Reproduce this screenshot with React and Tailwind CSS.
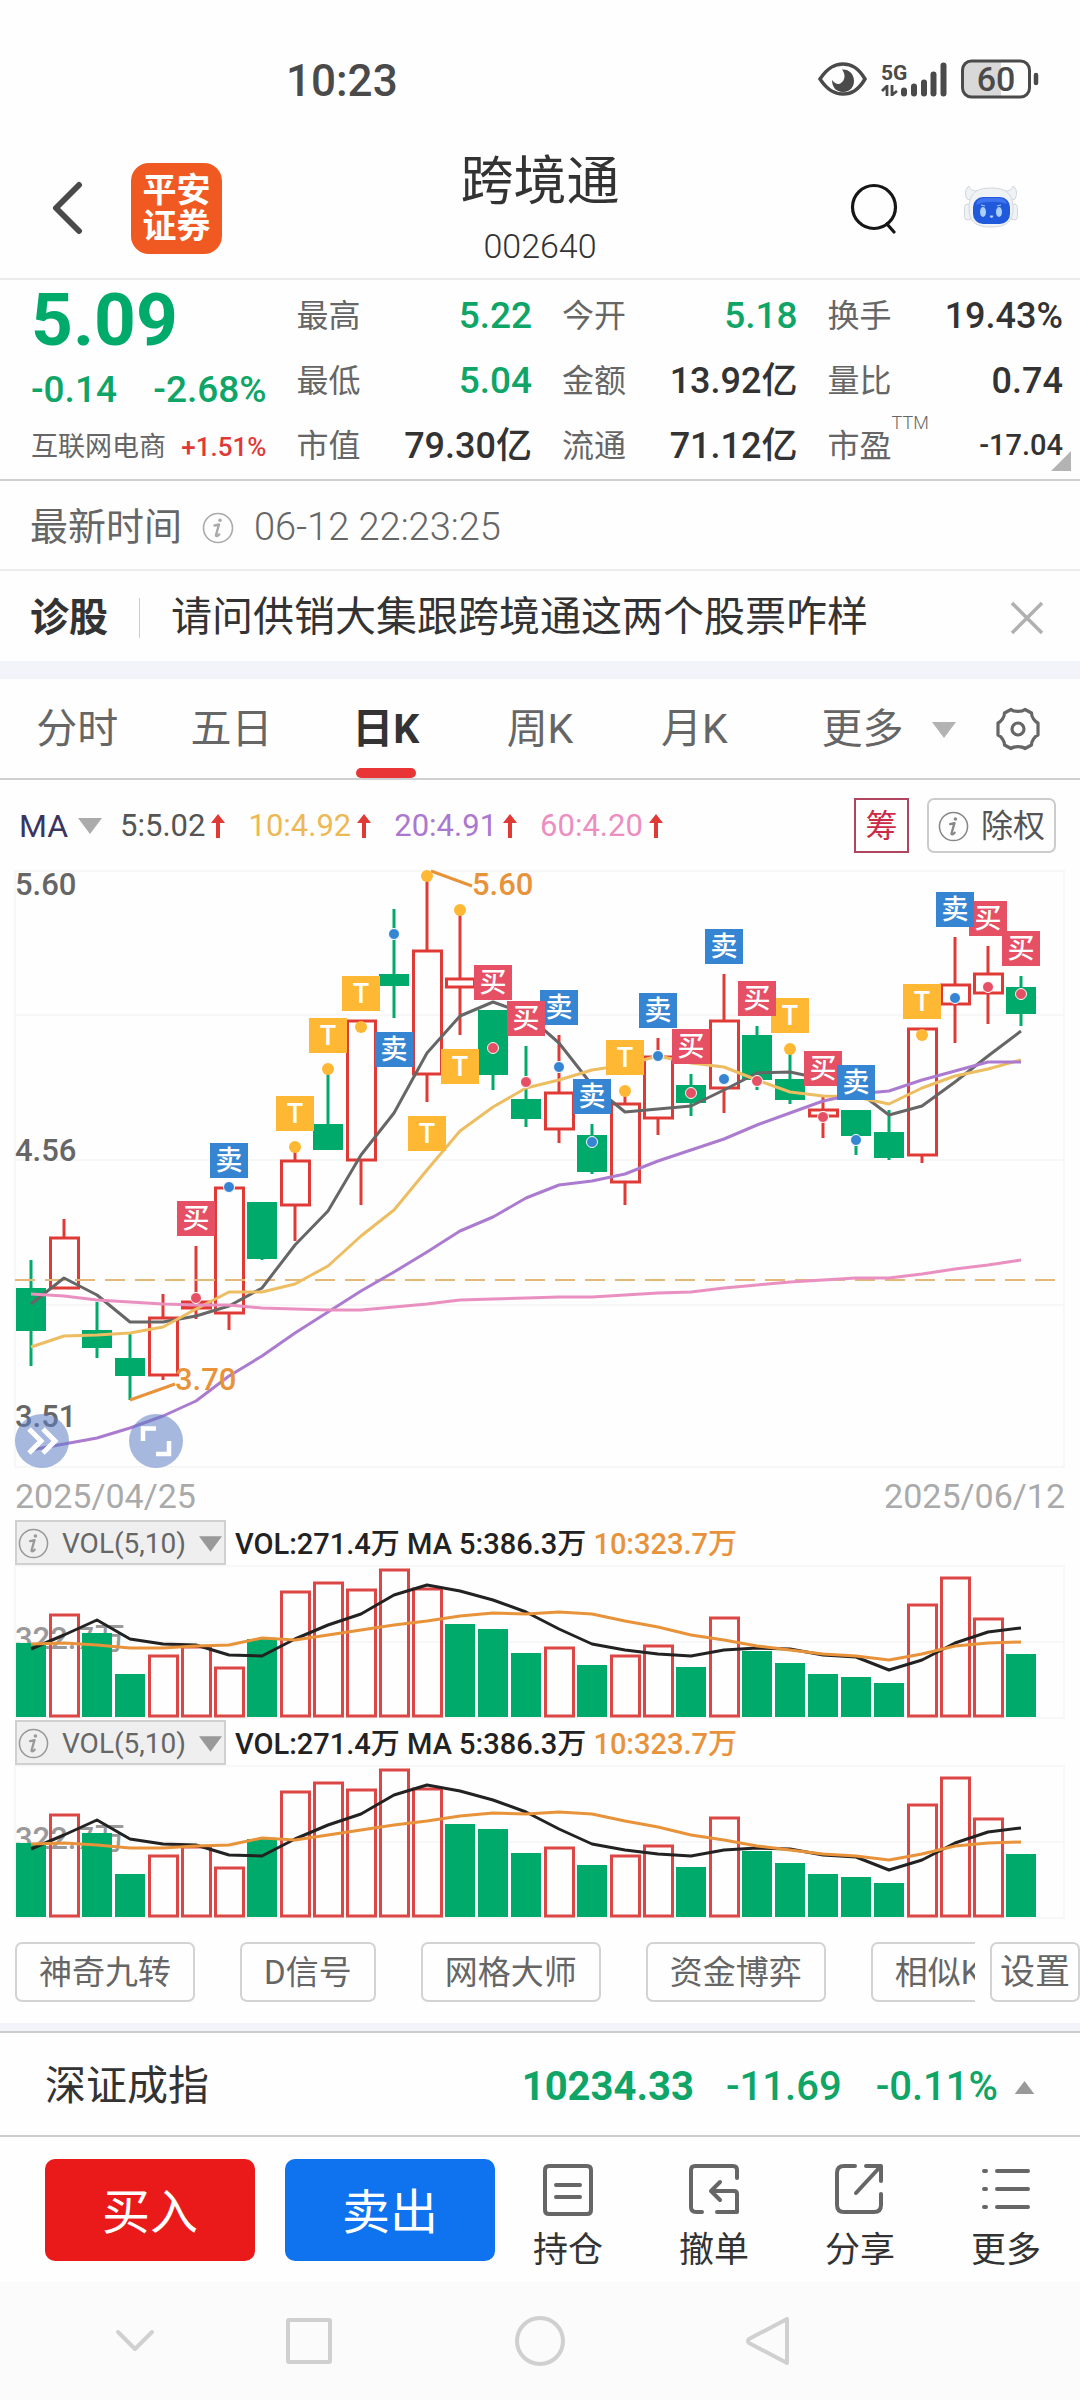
import React from "react";

const FONT = "font-['Roboto','Noto_Sans_CJK_SC',sans-serif]";

const UP = "#e03a36";
const DOWN = "#00aa6a";

const x = (i) => 31 + 33 * i;
const line = (ys) => ys.map((y, i) => `${x(i)},${y}`).join(" ");

/* [direction, body top, body bottom, wick top, wick bottom] */
const CANDLES = [
  ["d", 1288, 1331, 1260, 1366],
  ["u", 1237, 1289, 1219, 1289],
  ["d", 1330, 1348, 1302, 1358],
  ["d", 1358, 1376, 1334, 1400],
  ["u", 1317, 1376, 1294, 1380],
  ["u", 1301, 1309, 1246, 1319],
  ["u", 1187, 1314, 1187, 1330],
  ["d", 1202, 1259, 1202, 1260],
  ["u", 1160, 1206, 1147, 1241],
  ["d", 1124, 1150, 1069, 1150],
  ["u", 1020, 1161, 1020, 1205],
  ["d", 974, 986, 909, 1018],
  ["u", 950, 1075, 876, 1102],
  ["u", 978, 988, 910, 1035],
  ["d", 1010, 1075, 1010, 1090],
  ["d", 1099, 1119, 1046, 1127],
  ["u", 1092, 1130, 1035, 1143],
  ["d", 1135, 1172, 1124, 1174],
  ["u", 1103, 1183, 1095, 1205],
  ["u", 1056, 1119, 1038, 1135],
  ["d", 1085, 1103, 1074, 1116],
  ["u", 1020, 1089, 974, 1113],
  ["d", 1035, 1080, 1026, 1090],
  ["d", 1079, 1100, 1050, 1104],
  ["u", 1109, 1117, 1097, 1138],
  ["d", 1110, 1136, 1110, 1155],
  ["d", 1132, 1158, 1110, 1160],
  ["u", 1028, 1156, 1028, 1163],
  ["u", 984, 1005, 937, 1043],
  ["u", 973, 994, 946, 1024],
  ["d", 987, 1014, 976, 1026],
];

const MA5 = [1304, 1278, 1295, 1322, 1322, 1316, 1306, 1288, 1245, 1211, 1155, 1113, 1053, 1016, 1002, 1014, 1043, 1085, 1112, 1109, 1106, 1090, 1073, 1072, 1079, 1090, 1115, 1106, 1082, 1056, 1031];
const MA10 = [1347, 1336, 1335, 1333, 1327, 1309, 1292, 1292, 1284, 1266, 1236, 1210, 1170, 1131, 1107, 1088, 1080, 1070, 1065, 1056, 1063, 1067, 1080, 1092, 1096, 1097, 1104, 1088, 1076, 1069, 1060];
const MA20 = [1450, 1444, 1438, 1428, 1416, 1401, 1376, 1356, 1333, 1312, 1291, 1272, 1252, 1231, 1217, 1198, 1185, 1181, 1174, 1161, 1150, 1139, 1125, 1113, 1101, 1094, 1091, 1080, 1071, 1062, 1062];
const MA60 = [1294, 1296, 1300, 1302, 1304, 1305, 1305, 1308, 1309, 1310, 1310, 1307, 1304, 1300, 1299, 1298, 1297, 1297, 1295, 1293, 1292, 1288, 1285, 1282, 1280, 1278, 1278, 1274, 1269, 1265, 1260];

const BUY = "#e55065";
const SELL = "#3585d3";
const TRADE = "#ffb833";

const DOTS = [
  [5, 1298, BUY], [6, 1187, SELL], [8, 1147, TRADE], [9, 1069, TRADE], [10, 1027, TRADE], [11, 934, SELL],
  [12, 876, TRADE], [13, 910, TRADE], [14, 1048, BUY], [15, 1082, BUY], [16, 1067, SELL], [17, 1142, SELL],
  [18, 1091, TRADE], [19, 1056, SELL], [20, 1093, BUY], [21, 1079, SELL], [22, 1081, BUY], [23, 1049, TRADE],
  [24, 1117, BUY], [25, 1140, SELL], [27, 1035, TRADE], [28, 998, SELL], [29, 987, BUY], [30, 994, BUY],
];

/* [index, top, label], listed back to front */
const BADGES = [
  [8, 1096, "T"], [9, 1018, "T"], [10, 976, "T"], [12, 1116, "T"], [13, 1049, "T"], [18, 1040, "T"], [23, 998, "T"], [27, 984, "T"],
  [5, 1201, "买"], [6, 1143, "卖"], [11, 1032, "卖"], [16, 990, "卖"], [14, 965, "买"], [15, 1001, "买"],
  [17, 1079, "卖"], [19, 993, "卖"], [20, 1029, "买"], [21, 929, "卖"], [22, 981, "买"], [24, 1051, "买"],
  [25, 1065, "卖"], [30, 931, "买"], [29, 901, "买"], [28, 892, "卖"],
];
const BADGE_FILL = { T: TRADE, 买: BUY, 卖: SELL };

/* volume bars: direction and top edge, baseline 152 */
const VOLUME = [
  ["d", 78], ["u", 49], ["d", 68], ["d", 109], ["u", 90], ["u", 81], ["u", 102], ["d", 74], ["u", 26], ["u", 17],
  ["u", 24], ["u", 4], ["u", 23], ["d", 59], ["d", 64], ["d", 88], ["u", 82], ["d", 100], ["u", 90], ["u", 80],
  ["d", 102], ["u", 52], ["d", 86], ["d", 98], ["d", 109], ["d", 112], ["d", 118], ["u", 39], ["u", 12], ["u", 53], ["d", 89],
];
const VOL5 = [84, 70, 55, 74, 79, 80, 90, 91, 74, 60, 49, 30, 20, 26, 35, 47, 64, 79, 85, 89, 91, 85, 83, 84, 90, 92, 105, 95, 78, 67, 63];
const VOL10 = [79, 78, 80, 83, 83, 81, 80, 73, 75, 70, 65, 60, 56, 51, 48, 49, 47, 49, 56, 62, 70, 75, 81, 85, 89, 91, 95, 89, 81, 78, 77];

function Triangle({ up = false, className }) {
  return (
    <svg viewBox="0 0 24 16" className={className} aria-hidden="true">
      <path d={up ? "M12 0L24 16H0z" : "M0 0H24L12 16z"} fill="currentColor" />
    </svg>
  );
}

function Info({ className }) {
  return (
    <svg viewBox="0 0 32 32" className={className} fill="none" stroke="currentColor" aria-hidden="true">
      <circle cx="16" cy="16" r="14.5" strokeWidth="1.6" />
      <path d="M12.500 13.500l4.500-1-3 10.500c-.3 1.600 1.200 1.600 3.200-.6" strokeWidth="2.400" strokeLinecap="round" strokeLinejoin="round" />
      <circle cx="18" cy="8.200" r="1.800" fill="currentColor" stroke="none" />
    </svg>
  );
}

function StatusBar() {
  return (
    <div className="flex h-[154px] items-center justify-between pt-[4px] pr-[41px] pl-[286px] text-[#4a4a4a]">
      <span className="pt-[3px] text-[44px] leading-[52px] font-medium">10:23</span>
      <svg viewBox="0 0 222 42" className="h-[42px] w-[222px]" role="img" aria-label="5G 60%">
        <path d="M3 21C11 9 18 6 26 6s15 3 22 15C41 33 34 36 26 36S11 33 3 21z" fill="none" stroke="#4a4a4a" strokeWidth="3.500" />
        <path d="M25 11.500C32 11 37 16 37 23c0 6-4 11-11 11s-11-5-11-12c3 4 7 5 9 3 4-3 5-8 1-13.500z" fill="#4a4a4a" />
        <text x="64" y="22" fontSize="21" fontWeight="700" fill="#4a4a4a">5G</text>
        <path d="M70 27v11M70 28l-5 5M75 27v11M75 37l5-4" stroke="#4a4a4a" strokeWidth="2.800" fill="none" />
        <path d="M87 32.500v3M97 28.500v7M107 24.500v11M116.500 16.500v19M126.500 7.500v28" stroke="#4a4a4a" strokeWidth="6" strokeLinecap="round" />
        <path d="M156 4h28v35h-28a10 10 0 0 1-10-10V14a10 10 0 0 1 10-10z" fill="#d8d8d8" />
        <rect x="145.500" y="3" width="67" height="36" rx="9" fill="none" stroke="#4a4a4a" strokeWidth="3" />
        <text x="179" y="33" fontSize="34" fontWeight="500" textAnchor="middle" fill="#4a4a4a">60</text>
        <path d="M219 17v8" stroke="#4a4a4a" strokeWidth="4.500" strokeLinecap="round" />
      </svg>
    </div>
  );
}

function Robot() {
  return (
    <svg viewBox="0 0 54 46" className="h-[46px] w-[54px]" aria-hidden="true">
      <g fill="#f0f3f6" stroke="#d2d6dd" strokeWidth="1">
        <path d="M3 14C0 8 2 3 5 1c1 4 4 5 9 5l-5 10zM51 14c3-6 1-11-2-13-1 4-4 5-9 5l5 10z" />
        <rect x="0.500" y="19" width="7" height="16" rx="3.500" />
        <rect x="46.500" y="19" width="7" height="16" rx="3.500" />
        <path d="M27 3c14 0 22 5 22 20 0 13-6 19-22 19S5 36 5 23C5 8 13 3 27 3z" />
      </g>
      <rect x="9" y="12" width="37" height="27" rx="10" fill="#2159dd" />
      <path d="M12 20c1-5 4-7 9-7h13c5 0 8 2 9 6-9-3-22-3-31 1z" fill="#3f74ee" />
      <ellipse cx="19" cy="27" rx="3" ry="5" fill="#a9d0ff" />
      <ellipse cx="35" cy="27" rx="3" ry="5" fill="#a9d0ff" />
      <path d="M17 20l4 1M37 20l-4 1M26 31h3l-1.500 2z" stroke="#a9d0ff" strokeWidth="1" fill="#a9d0ff" />
    </svg>
  );
}

function Header() {
  return (
    <header className="grid h-[126px] grid-cols-[1fr_auto_1fr] items-start border-b-2 border-[#ececec]">
      <div className="flex h-[108px] items-center gap-[48px] pl-[51px]">
        <button type="button" aria-label="返回">
          <svg viewBox="0 0 32 54" className="h-[54px] w-[32px]" fill="none" stroke="#4a4a4a" strokeWidth="6" strokeLinecap="round" strokeLinejoin="round">
            <path d="M28 4L5 27l23 23" />
          </svg>
        </button>
        <div className="flex size-[91px] flex-col items-center justify-center rounded-[18px] bg-[#f05a22] text-[34px] leading-[36px] font-bold text-white">
          <span>平安</span>
          <span>证券</span>
        </div>
      </div>
      <div className="flex flex-col items-center gap-[18px] text-[#333]">
        <h1 className="text-[53px] leading-[56px]">跨境通</h1>
        <p className="text-[34px] leading-[36px] font-light">002640</p>
      </div>
      <div className="flex h-[108px] items-center justify-end gap-[65px] pr-[62px]">
        <button type="button" aria-label="搜索">
          <svg viewBox="0 0 50 52" className="h-[52px] w-[50px]" fill="none" stroke="#161616" strokeWidth="3.200" strokeLinecap="round">
            <circle cx="25" cy="25" r="21.500" />
            <path d="M38 42l7 8" />
          </svg>
        </button>
        <button type="button" aria-label="智能助手"><Robot /></button>
      </div>
    </header>
  );
}

const STATS = [
  [["最高", "5.22", "g"], ["最低", "5.04", "g"], ["市值", "79.30亿", ""]],
  [["今开", "5.18", "g"], ["金额", "13.92亿", ""], ["流通", "71.12亿", ""]],
  [["换手", "19.43%", ""], ["量比", "0.74", ""], ["市盈", "-17.04", "s"]],
];
const STAT_CLASS = {
  g: "text-[37px] text-[#0ea567]",
  "": "text-[36px] text-[#333]",
  s: "text-[29px] text-[#333]",
};

function Quote() {
  return (
    <section className="relative grid grid-cols-4 gap-x-[30px] border-b-2 border-[#cfcfcf] pt-[3px] pr-[17px] pb-px pl-[31px]">
      <div className="flex flex-col whitespace-nowrap">
        <div className="h-[75px] text-[73px] leading-[75px] font-bold text-[#00aa6a]">5.09</div>
        <div className="flex h-[63px] items-center justify-between text-[37px] font-medium text-[#0ea567]">
          <span>-0.14</span>
          <span>-2.68%</span>
        </div>
        <div className="flex h-[53px] items-center justify-between text-[27px] text-[#666]">
          <span>互联网电商</span>
          <span className="text-[26px] font-medium text-[#e03a36]">+1.51%</span>
        </div>
      </div>
      {STATS.map((column, c) => (
        <dl key={c} className="whitespace-nowrap">
          {column.map(([label, value, kind]) => (
            <div key={label} className="flex h-[65px] items-center justify-between">
              <dt className="text-[32px] text-[#666]">
                {label}
                {kind === "s" && <sup className="-top-[28px] text-[18px] font-light">TTM</sup>}
              </dt>
              <dd className={"font-medium " + STAT_CLASS[kind]}>{value}</dd>
            </div>
          ))}
        </dl>
      ))}
      <svg viewBox="0 0 20 20" className="absolute right-[9px] bottom-[8px] size-[20px]" aria-hidden="true">
        <path d="M20 0V20H0z" fill="#b3b3b3" />
      </svg>
    </section>
  );
}

function Tabs() {
  const tab = "relative flex h-full items-center justify-center pt-[2px]";
  return (
    <nav className="grid h-[101px] grid-cols-7 border-b-2 border-[#cfcfcf] text-[41px] text-[#666]">
      <button type="button" className={tab}>分时</button>
      <button type="button" className={tab}>五日</button>
      <button type="button" className={tab + " font-bold text-[#333]"}>
        日K
        <span className="absolute bottom-0 left-1/2 h-[10px] w-[60px] -translate-x-1/2 rounded-[5px] bg-[#e93535]" />
      </button>
      <button type="button" className={tab}>周K</button>
      <button type="button" className={tab}>月K</button>
      <div className="col-span-2 flex items-center justify-between pr-[40px] pl-[50px]">
        <button type="button" className="flex items-center gap-[29px] pt-[2px]">
          更多
          <Triangle className="h-[16px] w-[24px] text-[#b3b3b3]" />
        </button>
        <button type="button" aria-label="图表设置">
          <svg viewBox="0 0 44 44" className="size-[44px]" fill="none" stroke="#666" strokeWidth="3.200" strokeLinejoin="round">
            <path d="M15 2.500C18 5 26 5 29 2.500L35.500 6c0 4 3 8.500 6.500 10v12c-3.500 1.500-6.500 6-6.500 10L29 41.500c-3-2.500-11-2.500-14 0L8.500 38c0-4-3-8.500-6.500-10V16C5.500 14.500 8.500 10 8.500 6z" />
            <circle cx="22" cy="22" r="6" />
          </svg>
        </button>
      </div>
    </nav>
  );
}

function Average({ children, color }) {
  return (
    <span className={"flex items-center gap-[6px] " + color}>
      {children}
      <svg viewBox="0 0 14 24" className="h-[24px] w-[14px]" aria-hidden="true">
        <path d="M7 0l7 9H9v15H5V9H0z" fill="#e03a36" />
      </svg>
    </span>
  );
}

function Averages() {
  return (
    <div className="flex h-[90px] items-center justify-between pr-[24px] pl-[19px] text-[32px] whitespace-nowrap">
      <div className="flex items-center pt-[2px]">
        <button type="button" className="mr-[18px] flex items-center gap-[10px] text-[#3a3560]">
          MA
          <Triangle className="h-[16px] w-[24px] text-[#ababab]" />
        </button>
        <div className="flex items-center gap-[23px] text-[31px]">
          <Average color="text-[#555]">5:5.02</Average>
          <Average color="text-[#ecb955]">10:4.92</Average>
          <Average color="text-[#ab78d0]">20:4.91</Average>
          <Average color="text-[#ec8fc0]">60:4.20</Average>
        </div>
      </div>
      <div className="flex gap-[18px]">
        <button type="button" className="flex h-[55px] w-[55px] items-center justify-center border-2 border-[#b04560] pt-[2px] text-[#cc2b48]">筹</button>
        <button type="button" className="flex h-[55px] items-center gap-[12px] rounded-[7px] border-2 border-[#ccc] px-[9px] pt-[2px] text-[#555]">
          <Info className="size-[31px] text-[#888]" />
          除权
        </button>
      </div>
    </div>
  );
}

function PriceChart() {
  return (
    <div className="relative">
      <svg viewBox="0 870 1080 598" className="block h-auto w-full overflow-visible" role="img" aria-label="日K线图">
        <g stroke="#f7f7f7" strokeWidth="2" fill="none">
          <path d="M15 871H1064V1467H15zM15 1015H1064M15 1160H1064M15 1305H1064" />
        </g>
        <g fontSize="31" fontWeight="500" fill="#666">
          <text x="15" y="895">5.60</text>
          <text x="15" y="1161">4.56</text>
          <text x="15" y="1427">3.51</text>
        </g>
        {CANDLES.map(([dir, top, bottom, high, low], i) =>
          dir === "u" ? (
            <g key={i} stroke={UP} strokeWidth="3" fill="none">
              <path d={`M${x(i)} ${high}V${top}M${x(i)} ${bottom}V${low}`} />
              <rect x={x(i) - 13.5} y={top + 1} width="28" height={bottom - top - 2} fill={i === 5 ? UP : "none"} />
            </g>
          ) : (
            <g key={i} fill={DOWN}>
              <rect x={x(i) - 1.5} y={high} width="3" height={low - high} />
              <rect x={x(i) - 15} y={top} width="30" height={bottom - top} />
            </g>
          )
        )}
        <path d="M15 1280H1056" stroke="#e3b878" strokeWidth="2" strokeDasharray="20 10" />
        <g fill="none" strokeWidth="3" strokeLinejoin="round">
          <polyline points={line(MA5)} stroke="#666" />
          <polyline points={line(MA10)} stroke="#edbd62" />
          <polyline points={line(MA20)} stroke="#ab7bd0" />
          <polyline points={line(MA60)} stroke="#ea90c1" />
          <path d="M431 871L472 886M130 1400L175 1384" stroke="#e8933a" />
        </g>
        <g fontSize="31" fontWeight="500" fill="#e8933a">
          <text x="472" y="895">5.60</text>
          <text x="175" y="1390">3.70</text>
        </g>
        {DOTS.map(([i, y, fill]) => (
          <circle key={i} cx={x(i)} cy={y} r={fill === TRADE ? 6 : 5.5} fill={fill} stroke={fill === TRADE ? "none" : "#fff"} strokeWidth="1" />
        ))}
        {BADGES.map(([i, y, label]) => (
          <g key={i}>
            <rect x={x(i) - 19} y={y} width="38" height="35" fill={BADGE_FILL[label]} />
            <text x={x(i)} y={y + 27} fontSize="27" fontWeight="500" textAnchor="middle" fill="#fff">{label}</text>
          </g>
        ))}
      </svg>
      <div className="absolute bottom-0 left-[15px] flex gap-[60px]">
        <button type="button" aria-label="展开" className="size-[54px] rounded-full bg-[#5f7dc5]/55">
          <svg viewBox="0 0 54 54" fill="none" stroke="#fff" strokeWidth="5">
            <path d="M14 15l12 12-12 12M28 15l12 12-12 12" />
          </svg>
        </button>
        <button type="button" aria-label="全屏" className="size-[54px] rounded-full bg-[#5f7dc5]/55">
          <svg viewBox="0 0 54 54" fill="none" stroke="#fff" strokeWidth="4.500">
            <path d="M14 27V14.500h13M27 40h13V27" />
          </svg>
        </button>
      </div>
    </div>
  );
}

function VolumePanel() {
  return (
    <section>
      <div className="flex h-[45px] items-center gap-[9px] pl-[15px] text-[29px] font-medium whitespace-nowrap text-[#222]">
        <button type="button" className="flex h-[45px] w-[211px] items-center justify-between border-2 border-[#d0d0d0] bg-[#efefef] pt-[2px] pr-[2px] pl-px text-[28px] font-normal text-[#666]">
          <Info className="size-[31px] text-[#999]" />
          VOL(5,10)
          <Triangle className="h-[20px] w-[23px] text-[#999]" />
        </button>
        <span className="pt-[4px]">
          VOL:271.4万 MA 5:386.3万 <span className="text-[#e8933a]">10:323.7万</span>
        </span>
      </div>
      <svg viewBox="0 0 1080 155" className="block h-auto w-full" role="img" aria-label="成交量">
        <path d="M15 1H1064V153H15zM15 77H1064" stroke="#f7f7f7" strokeWidth="2" fill="none" />
        <text x="15" y="84" fontSize="31" fontWeight="500" fill="#999">322.7万</text>
        {VOLUME.map(([dir, top], i) =>
          dir === "u" ? (
            <rect key={i} x={x(i) - 13.5} y={top + 1} width="28" height={150 - top} fill="none" stroke="#dc4644" strokeWidth="3" />
          ) : (
            <rect key={i} x={x(i) - 15} y={top} width="30" height={152 - top} fill={DOWN} />
          )
        )}
        <g fill="none" strokeWidth="3" strokeLinejoin="round">
          <polyline points={line(VOL5)} stroke="#222" />
          <polyline points={line(VOL10)} stroke="#e8933a" />
        </g>
      </svg>
    </section>
  );
}

function Indicators() {
  const chip = "h-[60px] shrink-0 rounded-[7px] border-2 border-[#d3d3d3] px-[22px] pt-[2px]";
  return (
    <div className="flex h-[103px] items-center gap-[15px] pt-px text-[33px] whitespace-nowrap text-[#666]">
      <div className="flex min-w-0 flex-1 gap-[45px] overflow-hidden pl-[15px]">
        {["神奇九转", "D信号", "网格大师", "资金博弈", "相似K"].map((name) => (
          <button key={name} type="button" className={chip}>{name}</button>
        ))}
      </div>
      <button type="button" className="h-[60px] w-[90px] rounded-[7px] border-2 border-[#d3d3d3] pt-[2px] text-[35px]">设置</button>
    </div>
  );
}

const ACTIONS = [
  ["持仓", "M6 2H44Q48 2 48 6V46Q48 50 44 50H6Q2 50 2 46V6Q2 2 6 2zM13 21H37M13 33H37"],
  ["撤单", "M48 14V6Q48 2 44 2H6Q2 2 2 6V43Q2 48 7 48H13M28 48H48V30Q48 27 45 27H23M31 18L22 27L31 36"],
  ["分享", "M20 2H9Q2 2 2 9V41Q2 48 9 48H39Q46 48 46 41V30M31 2H46V17M45 3L21 29"],
  ["更多", "M3 7H5M16 7H47M3 25H5M16 25H47M3 43H5M16 43H47"],
];

function TradeBar() {
  const trade = "h-[102px] w-[210px] rounded-[10px] pt-[6px] text-[48px] text-white";
  return (
    <div className="flex h-[145px] items-center pr-px pl-[45px]">
      <div className="flex gap-[30px]">
        <button type="button" className={trade + " bg-[#ea1a1a]"}>买入</button>
        <button type="button" className={trade + " bg-[#0f72ee]"}>卖出</button>
      </div>
      <div className="grid flex-1 grid-cols-4 pt-[18px]">
        {ACTIONS.map(([label, d]) => (
          <button key={label} type="button" className="flex flex-col items-center gap-[13px] text-[35px] leading-[44px] text-[#333]">
            <svg viewBox="0 0 50 52" className="h-[52px] w-[50px]" fill="none" stroke="#666" strokeWidth="4" strokeLinecap="round" strokeLinejoin="round" aria-hidden="true">
              <path d={d} />
            </svg>
            {label}
          </button>
        ))}
      </div>
    </div>
  );
}

function SystemNav() {
  const icon = { fill: "none", stroke: "#d0d0d0", strokeWidth: 4, strokeLinejoin: "round", strokeLinecap: "round" };
  return (
    <nav className="flex h-[118px] items-center bg-[#fbfbfb] pl-[115px]">
      <button type="button" aria-label="收起">
        <svg viewBox="0 0 40 24" className="h-[24px] w-[40px]" {...icon}><path d="M3 3l17 17L37 3" /></svg>
      </button>
      <button type="button" aria-label="最近任务" className="ml-[130px]">
        <svg viewBox="0 0 48 48" className="size-[48px]" {...icon}><rect x="3" y="3" width="42" height="42" rx="1" /></svg>
      </button>
      <button type="button" aria-label="主页" className="ml-[182px]">
        <svg viewBox="0 0 50 50" className="size-[50px]" {...icon}><circle cx="25" cy="25" r="23" /></svg>
      </button>
      <button type="button" aria-label="返回" className="ml-[180px]">
        <svg viewBox="0 0 46 50" className="h-[50px] w-[46px]" {...icon}><path d="M42 3V47L4 27Q2 25 4 23z" /></svg>
      </button>
    </nav>
  );
}

export default function App() {
  return (
    <main className={"bg-[#fefefe] text-[#333] " + FONT}>
      <StatusBar />
      <Header />
      <Quote />
      <div className="flex h-[90px] items-center border-b-2 border-[#ececec] pt-[5px] pl-[30px] text-[38px] text-[#666]">
        <span>最新时间</span>
        <Info className="mx-[20px] size-[32px] text-[#aaa]" />
        <time className="font-light">06-12 22:23:25</time>
      </div>
      <div className="flex h-[90px] items-center px-[30px] pt-[4px] whitespace-nowrap">
        <strong className="text-[39px]">诊股</strong>
        <span className="mx-[31px] h-[40px] w-px bg-[#ccc]" />
        <a href="#diagnosis" className="flex-1 text-[41px]">请问供销大集跟跨境通这两个股票咋样</a>
        <button type="button" aria-label="关闭" className="mr-[6px]">
          <svg viewBox="0 0 34 34" className="size-[34px]" stroke="#b0b0b0" strokeWidth="3.500"><path d="M2 2l30 30M32 2L2 32" /></svg>
        </button>
      </div>
      <div className="h-[18px] bg-[#f2f4f9]" />
      <Tabs />
      <Averages />
      <PriceChart />
      <div className="flex h-[52px] items-center justify-between px-[15px] pt-[4px] text-[34px] text-[#aaa]">
        <span>2025/04/25</span>
        <span>2025/06/12</span>
      </div>
      <VolumePanel />
      <VolumePanel />
      <Indicators />
      <div className="h-[8px] bg-[#f2f4f9]" />
      <div className="flex h-[106px] items-center justify-between border-y-2 border-[#ccc] pt-[6px] pr-[45px] pl-[45px]">
        <span className="text-[41px]">深证成指</span>
        <span className="flex items-center text-[40px] font-medium text-[#0ea567]">
          <b>10234.33</b>
          <span className="ml-[32px]">-11.69</span>
          <span className="mr-[16px] ml-[34px]">-0.11%</span>
          <Triangle up className="h-[13px] w-[21px] text-[#999]" />
        </span>
      </div>
      <TradeBar />
      <SystemNav />
    </main>
  );
}
